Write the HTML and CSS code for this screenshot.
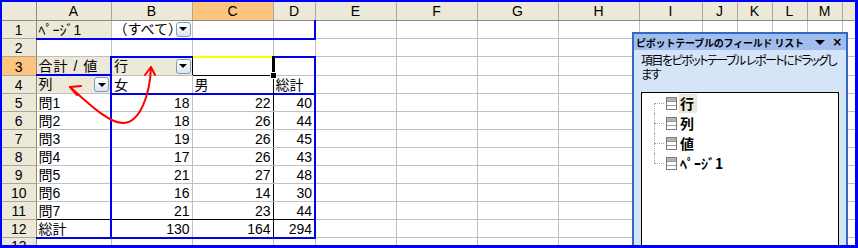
FILE: index.html
```html
<!DOCTYPE html>
<html lang="ja">
<head>
  <meta charset="UTF-8" />
  <title>ピボットテーブル</title>
  <link rel="stylesheet" href="styles.css">
</head>
<body>
  <div class="frame">
    <table class="sheet">
      <colgroup>
        <col class="w-hd"><col class="w-a"><col class="w-m"><col class="w-m"><col class="w-d">
        <col class="w-m"><col class="w-m"><col class="w-m"><col class="w-m"><col class="w-i">
        <col class="w-s"><col class="w-s"><col class="w-s"><col class="w-s"><col class="w-n">
      </colgroup>
      <tr class="colhead">
        <th class="corner"></th><th>A</th><th>B</th><th class="sel">C</th><th>D</th><th>E</th><th>F</th><th>G</th><th>H</th><th>I</th><th>J</th><th>K</th><th>L</th><th>M</th><th></th>
      </tr>
      <tr>
        <th>1</th>
        <td class="fld bb">ﾍﾟｰｼﾞ1</td>
        <td class="bb"><span class="dd"></span>（すべて）</td>
        <td class="bb"></td>
        <td class="bb br"></td>
        <td></td><td></td><td></td><td></td><td></td><td></td><td></td><td></td><td></td><td></td>
      </tr>
      <tr>
        <th>2</th>
        <td></td><td></td><td></td><td></td><td></td><td></td><td></td><td></td><td></td><td></td><td></td><td></td><td></td><td></td>
      </tr>
      <tr>
        <th class="sel">3</th>
        <td class="fld bb wide">合計 / 値</td>
        <td class="fld bt bl kr"><span class="dd"></span>行</td>
        <td class="cur"><span class="handle"></span></td>
        <td class="bt br"></td>
        <td></td><td></td><td></td><td></td><td></td><td></td><td></td><td></td><td></td><td></td>
      </tr>
      <tr>
        <th>4</th>
        <td class="fld"><span class="dd"></span>列</td>
        <td class="bl bb">女</td>
        <td class="bb kr">男</td>
        <td class="bb br">総計</td>
        <td></td><td></td><td></td><td></td><td></td><td></td><td></td><td></td><td></td><td></td>
      </tr>
      <tr>
        <th>5</th>
        <td>問1</td><td class="bl num">18</td><td class="kr num">22</td><td class="br num">40</td>
        <td></td><td></td><td></td><td></td><td></td><td></td><td></td><td></td><td></td><td></td>
      </tr>
      <tr>
        <th>6</th>
        <td>問2</td><td class="bl num">18</td><td class="kr num">26</td><td class="br num">44</td>
        <td></td><td></td><td></td><td></td><td></td><td></td><td></td><td></td><td></td><td></td>
      </tr>
      <tr>
        <th>7</th>
        <td>問3</td><td class="bl num">19</td><td class="kr num">26</td><td class="br num">45</td>
        <td></td><td></td><td></td><td></td><td></td><td></td><td></td><td></td><td></td><td></td>
      </tr>
      <tr>
        <th>8</th>
        <td>問4</td><td class="bl num">17</td><td class="kr num">26</td><td class="br num">43</td>
        <td></td><td></td><td></td><td></td><td></td><td></td><td></td><td></td><td></td><td></td>
      </tr>
      <tr>
        <th>9</th>
        <td>問5</td><td class="bl num">21</td><td class="kr num">27</td><td class="br num">48</td>
        <td></td><td></td><td></td><td></td><td></td><td></td><td></td><td></td><td></td><td></td>
      </tr>
      <tr>
        <th>10</th>
        <td>問6</td><td class="bl num">16</td><td class="kr num">14</td><td class="br num">30</td>
        <td></td><td></td><td></td><td></td><td></td><td></td><td></td><td></td><td></td><td></td>
      </tr>
      <tr>
        <th>11</th>
        <td class="kb">問7</td><td class="bl kb num">21</td><td class="kr kb num">23</td><td class="br kb num">44</td>
        <td></td><td></td><td></td><td></td><td></td><td></td><td></td><td></td><td></td><td></td>
      </tr>
      <tr>
        <th>12</th>
        <td class="bb">総計</td><td class="bl bb num">130</td><td class="kr bb num">164</td><td class="br bb num">294</td>
        <td></td><td></td><td></td><td></td><td></td><td></td><td></td><td></td><td></td><td></td>
      </tr>
      <tr class="last">
        <th>13</th>
        <td></td><td></td><td></td><td></td><td></td><td></td><td></td><td></td><td></td><td></td><td></td><td></td><td></td><td></td>
      </tr>
    </table>

    <!-- 赤い矢印（行 ⇔ 列 の入れ替え） -->
    <svg class="arrow" width="858" height="248" viewBox="2 2 858 248">
      <g fill="none" stroke="#ff0000" stroke-width="2" stroke-linecap="round" stroke-linejoin="round">
        <path d="M70 87 C90 105 110 124 124 123 C140 122 150 95 151 67" />
        <path d="M81 86 L70 87 L77 95" />
        <path d="M145 75 L151 67 L155 75" />
      </g>
    </svg>

    <!-- フィールド リスト -->
    <div class="pane">
      <div class="pane-title">
        <span>ピボットテーブルのフィールド リスト</span>
        <span class="pane-btns"><i class="tri"></i><b>×</b></span>
      </div>
      <p class="pane-note">項目をピボットテーブル レポートにドラッグし<br>ます</p>
      <div class="field-box">
        <ul class="fields">
          <li><svg width="11" height="13" viewBox="0 0 11 13"><rect x="0.5" y="0.5" width="10" height="12" fill="#fff" stroke="#7b7b7b"/><rect x="1" y="1" width="9" height="3" fill="#b4b4b4"/><path d="M1 4.5H10M1 8.5H10" stroke="#9c9c9c"/></svg><b class="on">行</b></li>
          <li><svg width="11" height="13" viewBox="0 0 11 13"><rect x="0.5" y="0.5" width="10" height="12" fill="#fff" stroke="#7b7b7b"/><rect x="1" y="1" width="9" height="3" fill="#b4b4b4"/><path d="M1 4.5H10M1 8.5H10" stroke="#9c9c9c"/></svg><b>列</b></li>
          <li><svg width="11" height="13" viewBox="0 0 11 13"><rect x="0.5" y="0.5" width="10" height="12" fill="#fff" stroke="#7b7b7b"/><rect x="1" y="1" width="9" height="3" fill="#b4b4b4"/><path d="M1 4.5H10M1 8.5H10" stroke="#9c9c9c"/></svg><b>値</b></li>
          <li><svg width="11" height="13" viewBox="0 0 11 13"><rect x="0.5" y="0.5" width="10" height="12" fill="#fff" stroke="#7b7b7b"/><rect x="1" y="1" width="9" height="3" fill="#b4b4b4"/><path d="M1 4.5H10M1 8.5H10" stroke="#9c9c9c"/></svg><b>ﾍﾟｰｼﾞ1</b></li>
        </ul>
      </div>
    </div>
  </div>
</body>
</html>
```

FILE: styles.css
```css
body {
  margin: 0;
  font-family: "Liberation Sans", "Noto Sans CJK JP", sans-serif;
  color: #000;
  background: #fff;
}
.frame {
  position: relative;
  width: 858px;
  height: 248px;
  box-sizing: border-box;
  border: 2px solid #0000ff;
  border-right-width: 3px;
  border-bottom-width: 3px;
  overflow: hidden;
  background: #fff;
}

/* ==== シート ==== */
.sheet {
  border-collapse: collapse;
  table-layout: fixed;
  width: 853px;
  font-size: 14px;
}
.w-hd { width: 34px; }
.w-a { width: 75px; }
.w-m { width: 81px; }
.w-d { width: 42px; }
.w-i { width: 63px; }
.w-s { width: 35px; }
.w-n { width: 13px; }
.sheet tr {
  height: 18px;
}
.sheet td,
.sheet th {
  padding: 0 2px;
  line-height: 16px;
  border: 1px solid #c0c0c0;
  white-space: nowrap;
  overflow: hidden;
  vertical-align: bottom;
  font-weight: normal;
}
.sheet th {
  background: #ece9d8;
  border-color: #aca899;
  text-align: center;
}
.sheet tr th:first-child {
  border-left: 0;
  border-right-color: #8e8b7c;
}
.sheet .colhead th {
  border-top: 0;
  border-bottom-color: #8e8b7c;
  vertical-align: middle;
}
.sheet .last th {
  vertical-align: top;
}
.sheet th.sel {
  background: #fdc47d;
}
.sheet td.num {
  text-align: right;
}
.sheet td.fld {
  background: #ece9d8;
}
.sheet td.wide {
  letter-spacing: 1px;
}

/* ピボットの枠線 */
.sheet td.bb { border-bottom: 2px solid #0000ee; }
.sheet td.bt { border-top: 2px solid #0000ee; }
.sheet td.bl { border-left: 2px solid #0000ee; }
.sheet td.br { border-right: 2px solid #0000ee; }
.sheet td.kr { border-right: 1px solid #000; }
.sheet td.kb { border-bottom: 1px solid #000; }

/* アクティブセル */
.sheet td.cur {
  position: relative;
  overflow: visible;
  border-top: 2px solid #ffff00;
  border-left: 1px solid #000;
  border-bottom: 1px solid #000;
  border-right: 3px solid #000;
}
.handle {
  position: absolute;
  right: -5px;
  bottom: -4px;
  width: 5px;
  height: 5px;
  background: #000;
  border: 1px solid #fff;
}

/* ドロップダウン ボタン */
.dd {
  float: right;
  display: flex;
  align-items: center;
  justify-content: center;
  width: 13px;
  height: 13px;
  margin: 1px -1px 1px 0;
  border: 1px solid #7f9bbd;
  border-radius: 3px;
  background: linear-gradient(#ffffff, #dde4ee);
}
.dd::after {
  content: "";
  border-top: 4px solid #000;
  border-left: 4px solid transparent;
  border-right: 4px solid transparent;
}

/* 矢印 */
.arrow {
  position: absolute;
  left: 0;
  top: 0;
  pointer-events: none;
}

/* ==== フィールド リスト ==== */
.pane {
  position: absolute;
  left: 630px;
  top: 30px;
  width: 216px;
  height: 240px;
  box-sizing: border-box;
  border: 2px solid #316ac5;
  background: #d6e4f8;
  font-family: "Noto Sans CJK JP", sans-serif;
}
.pane-title {
  display: flex;
  align-items: center;
  justify-content: space-between;
  height: 16px;
  padding: 0 4px 0 2px;
  background: #a1bdee;
  font-size: 10px;
  font-weight: bold;
  letter-spacing: -0.2px;
}
.pane-btns {
  display: flex;
  align-items: center;
  gap: 7px;
}
.pane-btns b {
  font-family: "DejaVu Sans", sans-serif;
  font-size: 12px;
}
.tri {
  border-top: 5px solid #000;
  border-left: 5px solid transparent;
  border-right: 5px solid transparent;
}
.pane-note {
  margin: 3px 0 0 7px;
  font-size: 12px;
  line-height: 14px;
  letter-spacing: -1.5px;
  font-feature-settings: "palt";
  white-space: nowrap;
}
.field-box {
  margin: 11px 7px 0 7px;
  height: 200px;
  background: #fff;
  border: 1px solid #000;
}
.fields {
  list-style: none;
  margin: 0;
  padding: 0 0 0 12px;
}
.fields li {
  position: relative;
  display: flex;
  align-items: center;
  height: 20px;
  padding-left: 12px;
}
.fields li::before {
  content: "";
  position: absolute;
  left: 0;
  top: 0;
  bottom: 0;
  border-left: 1px dotted #a8a8a8;
}
.fields li:first-child::before {
  top: 50%;
}
.fields li:last-child::before {
  bottom: 50%;
}
.fields li::after {
  content: "";
  position: absolute;
  left: 0;
  top: 50%;
  width: 10px;
  border-top: 1px dotted #a8a8a8;
}
.fields svg {
  flex: none;
}
.fields b {
  margin-left: 2px;
  padding: 0 3px 1px 1px;
  font-size: 14px;
  line-height: 18px;
}
.fields b.on {
  background: #ece9d8;
}
```
